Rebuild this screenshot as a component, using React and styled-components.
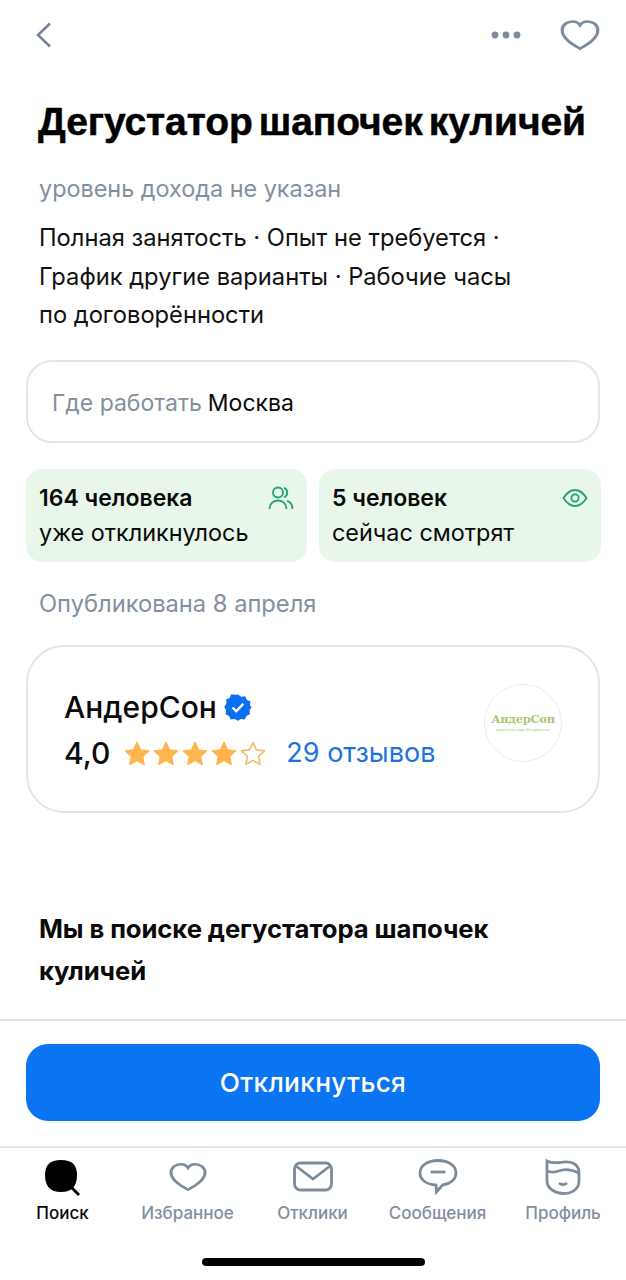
import React from "react";
import styled, { createGlobalStyle } from "styled-components";

const Global = createGlobalStyle`
  html, body { margin: 0; padding: 0; background: #fff; }
  * { box-sizing: border-box; }
`;
const Page = styled.div`
  width: 626px; height: 1280px; overflow: hidden; background: #fff; display: flex; flex-direction: column;
  font-family: Inter, "Noto Sans", sans-serif; color: #0a0a0a;
  & > * { flex-shrink: 0; }
`;
const TopBar = styled.header`
  height: 70px; display: flex; align-items: center; padding: 0 25px 0 36px; justify-content: space-between;
`;
const TopActions = styled.div`display: flex; align-items: center; gap: 38px;`;
const Title = styled.h1`
  margin: 28px 0 0 38px; font: 700 39px/48px "Liberation Sans", Arial, sans-serif; letter-spacing: -0.1px; word-spacing: -4.5px;
  white-space: nowrap; -webkit-text-stroke: 0.5px #000; color: #000;
`;
const Salary = styled.div`
  margin: 28px 0 0 39px; font-size: 23.4px; line-height: 30px; color: #8290a0;
`;
const Description = styled.p`
  margin: 15px 0 0 39px; font-size: 23.7px; line-height: 38.5px; color: #111; white-space: pre-line;
`;
const Location = styled.div`
  margin: 25px 26px 0; height: 83px; border: 2px solid #e1e5ee; border-radius: 26px; display: flex; align-items: center; gap: 6px;
  padding: 3px 0 0 24px; font-size: 23px;
`;
const Muted = styled.span`color: #8290a0;`;
const Stats = styled.div`
  margin: 26px 25px 0 26px; display: grid; grid-template-columns: 281px 282px; gap: 12px;
`;
const Stat = styled.div`
  height: 93px; border-radius: 16px; background: #e8f7ea; padding: 13px 13px 0 13px;
`;
const StatTop = styled.div`display: flex; justify-content: space-between; align-items: center; font-size: 23px; font-weight: 600; line-height: 32px;`;
const StatBottom = styled.div`font-size: 23.4px; line-height: 40px; margin-top: -1px;`;
const Published = styled.div`
  margin: 27px 0 0 39px; font-size: 23.7px; line-height: 30px; color: #8290a0;
`;
const Company = styled.section`
  margin: 26px 26px 0; height: 168px; border: 2px solid #e1e5ee; border-radius: 38px; display: flex; justify-content: space-between; align-items: flex-start;
  padding: 37px 36px 0 36px;
`;
const CompanyInfo = styled.div`display: flex; flex-direction: column; gap: 7px; margin-top: 4px;`;
const CompanyName = styled.div`display: flex; align-items: center; gap: 7px; font-size: 30px; font-weight: 500; line-height: 38px;`;
const RatingRow = styled.div`display: flex; align-items: center; line-height: 40px;`;
const Rating = styled.span`font-size: 30px; font-weight: 500; margin-right: 13px;`;
const Stars = styled.div`display: flex; gap: 1px; margin-right: 19px;`;
const Reviews = styled.span`font-size: 27px; color: #1a73e0;`;
const Logo = styled.div`
  width: 78px; height: 78px; border-radius: 50%; border: 1px solid #e9ecea; display: flex; flex-direction: column; align-items: center; justify-content: center;
`;
const LogoName = styled.div`font: 700 11.5px/13px "DejaVu Serif", serif; color: #a9c777; letter-spacing: -0.3px;`;
const LogoTag = styled.div`font: 400 3.9px/6px "Liberation Sans", sans-serif; color: #b5cf8a; white-space: nowrap; margin-top: 1px;`;
const ArticleTitle = styled.h2`
  margin: 95px 0 0 39px; font: 700 25.7px/42px Inter, sans-serif; letter-spacing: -0.1px; height: 84px; white-space: pre-line;
`;
const Action = styled.div`
  margin-top: 27px; border-top: 2px solid #e3e5e9; padding: 23px 26px 0; height: 129px; border-bottom: 2px solid #e3e5e9;
`;
const Apply = styled.button`
  width: 100%; height: 77px; border: 0; border-radius: 22px; background: #0a74f2; color: #fff; font: 500 26.3px Inter, sans-serif; letter-spacing: 0.3px;
`;
const Tabs = styled.nav`
  display: grid; grid-template-columns: 125px 125px 125px 125px 126px; padding-top: 11px;
`;
const Tab = styled.div`
  display: flex; flex-direction: column; align-items: center; height: 66px; font-size: 17px; font-weight: 500;
  color: ${p => (p.$active ? "#0a0a0a" : "#8290a0")};
`;
const TabIcon = styled.div`height: 43px; display: flex; align-items: flex-start; justify-content: center;`;
const TabLabel = styled.div`line-height: 24px; white-space: nowrap; margin-top: 1px;`;
const HomeBar = styled.div`
  width: 223px; height: 8px; border-radius: 4px; background: #000; margin: 33px auto 0 202px;
`;

const Star = ({ filled }) => (
  <svg width="28" height="26" viewBox="0 0 28 26">
    <path d="M14 2.500l3.400 7.400 8.100 1-6 5.500 1.600 8-7.100-4-7.100 4 1.600-8-6-5.500 8.100-1z"
      fill={filled ? "#ffb54d" : "none"} stroke={filled ? "#ffb54d" : "#f0bd6d"} strokeWidth={filled ? 1.5 : 1.6} strokeLinejoin="round" />
  </svg>
);
const HeartPath = "M20 36C13 31 3 24 3 14.500 3 8 8 4 13 4c3 0 5.500 1.500 7 4.500C21.500 5.500 24 4 27 4c5 0 10 4 10 10.500C37 24 27 31 20 36z";

export default function App() {
  return (
    <Page>
      <Global />
      <TopBar>
        <svg width="16" height="26" viewBox="0 0 16 26" fill="none"><path d="M14 1.500L2 13l12 11.500" stroke="#76869a" strokeWidth="2.600" /></svg>
        <TopActions>
          <svg width="30" height="10" viewBox="0 0 30 10" fill="#7d8b9c"><circle cx="4" cy="5" r="3.400" /><circle cx="15" cy="5" r="3.400" /><circle cx="26" cy="5" r="3.400" /></svg>
          <svg width="42" height="34" viewBox="0 0 40 40" preserveAspectRatio="none" fill="none"><path d={HeartPath} stroke="#7d8b9c" strokeWidth="3" /></svg>
        </TopActions>
      </TopBar>
      <Title>Дегустатор шапочек куличей</Title>
      <Salary>уровень дохода не указан</Salary>
      <Description>{"Полная занятость · Опыт не требуется ·\nГрафик другие варианты · Рабочие часы\nпо договорённости"}</Description>
      <Location><Muted>Где работать</Muted> Москва</Location>
      <Stats>
        <Stat>
          <StatTop>164 человека
            <svg width="26" height="26" viewBox="0 0 26 26" fill="none" stroke="#1ea466" strokeWidth="1.800"><circle cx="10" cy="7.500" r="5" /><path d="M16 2.800a5 5 0 0 1 0 9.400M1.500 24c0-5 3.500-8.500 8.500-8.500s8.500 3.500 8.500 8.500M19 15.800c3.500 1 5.500 4 5.500 8.200" /></svg>
          </StatTop>
          <StatBottom>уже откликнулось</StatBottom>
        </Stat>
        <Stat>
          <StatTop>5 человек
            <svg width="26" height="20" viewBox="0 0 26 20" fill="none" stroke="#1ea466" strokeWidth="1.800"><path d="M1.500 10C5 4.500 8.500 2 13 2s8 2.500 11.500 8C21 15.500 17.500 18 13 18S5 15.500 1.500 10z" /><circle cx="13" cy="10" r="3.600" /></svg>
          </StatTop>
          <StatBottom>сейчас смотрят</StatBottom>
        </Stat>
      </Stats>
      <Published>Опубликована 8 апреля</Published>
      <Company>
        <CompanyInfo>
          <CompanyName>АндерСон
            <svg width="28" height="28" viewBox="0 0 28 28"><path fill="#0a6ff0" d="M14 1.500l3.300 2.200 3.900-.4 1.700 3.600 3.500 1.700-.4 3.900L27.700 14l-2.200 3.300.4 3.900-3.500 1.700-1.700 3.500-3.900-.4L14 27.700l-3.300-1.700-3.900.4-1.700-3.500-3.500-1.700.4-3.900L.3 14l2.200-3.500-.4-3.900 3.500-1.700 1.700-3.600 3.900.4z" /><path d="M8.500 14.500l3.800 3.700 7-7.400" fill="none" stroke="#fff" strokeWidth="2.400" /></svg>
          </CompanyName>
          <RatingRow>
            <Rating>4,0</Rating>
            <Stars><Star filled /><Star filled /><Star filled /><Star filled /><Star /></Stars>
            <Reviews>29 отзывов</Reviews>
          </RatingRow>
        </CompanyInfo>
        <Logo>
          <LogoName>АндерСон</LogoName>
          <LogoTag>домашнее кафе Владивосток</LogoTag>
        </Logo>
      </Company>
      <ArticleTitle>{"Мы в поиске дегустатора шапочек\nкуличей"}</ArticleTitle>
      <Action><Apply>Откликнуться</Apply></Action>
      <Tabs>
        <Tab $active>
          <TabIcon>
            <svg width="40" height="38" viewBox="0 0 40 38"><path d="M18 1c11 0 16 5 16 15 0 11-5 17-16 17S2 27 2 16C2 6 7 1 18 1z" fill="#000" /><path d="M28 28l8 8" stroke="#000" strokeWidth="2.800" /></svg>
          </TabIcon>
          <TabLabel>Поиск</TabLabel>
        </Tab>
        <Tab>
          <TabIcon>
            <svg width="40" height="32" viewBox="0 0 40 40" preserveAspectRatio="none" fill="none" style={{ marginTop: 2 }}><path d={HeartPath} stroke="#7d8b9c" strokeWidth="3" /></svg>
          </TabIcon>
          <TabLabel>Избранное</TabLabel>
        </Tab>
        <Tab>
          <TabIcon>
            <svg width="40" height="32" viewBox="0 0 40 32" fill="none" stroke="#7d8b9c" strokeWidth="2.800" style={{ marginTop: 2 }}><rect x="1.500" y="2" width="37" height="27" rx="6" /><path d="M3 5l17 13L37 5" /></svg>
          </TabIcon>
          <TabLabel>Отклики</TabLabel>
        </Tab>
        <Tab>
          <TabIcon>
            <svg width="40" height="36" viewBox="0 0 40 36" fill="none" stroke="#7d8b9c" strokeWidth="2.800"><path d="M20 1.500c10 0 18 5 18 12.500 0 6-5 10.500-13.500 12L18.500 33l-.5-7C8 25.500 2 20.500 2 14 2 6.500 10 1.500 20 1.500z" /><path d="M12.500 13h15" /></svg>
          </TabIcon>
          <TabLabel>Сообщения</TabLabel>
        </Tab>
        <Tab>
          <TabIcon>
            <svg width="38" height="36" viewBox="0 0 38 36" fill="none" stroke="#7d8b9c" strokeWidth="2.800"><path d="M3 2c4 2 8 2 13 1.500C26 1.500 35 4 35 14v8c0 8-7 12.500-15 12.500S3 30 3 22z" /><path d="M3 12c5 2 10 1 15-1 5-1 11 0 17 3M15 24c2.500 2 5.500 2 8 0" /></svg>
          </TabIcon>
          <TabLabel>Профиль</TabLabel>
        </Tab>
      </Tabs>
      <HomeBar />
    </Page>
  );
}
